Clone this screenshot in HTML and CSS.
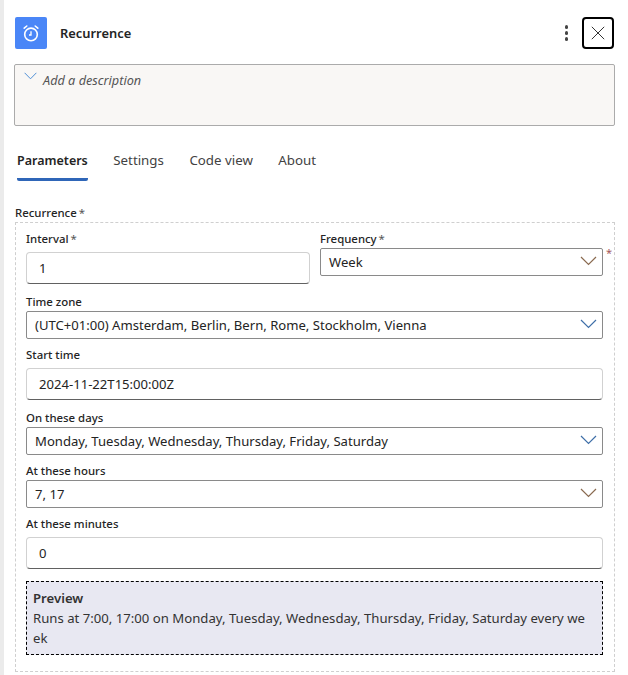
FILE: index.html
```html
<!DOCTYPE html>
<html lang="en">
<head>
<meta charset="utf-8">
<title>Recurrence</title>
<link rel="stylesheet" href="styles.css">
</head>
<body>
<svg class="defs" width="0" height="0" aria-hidden="true">
  <symbol id="chev-warm" viewBox="0 0 17 10">
    <path d="M1 1 8.5 8.5 16 1" fill="none" stroke="#8a6a50" stroke-width="1.2"/>
  </symbol>
  <symbol id="chev-cool" viewBox="0 0 17 10">
    <path d="M1 1 8.5 8.5 16 1" fill="none" stroke="#3f6fa8" stroke-width="1.2"/>
  </symbol>
</svg>
<div class="panel">
  <header class="head">
    <div class="app-icon">
      <svg width="18" height="18" viewBox="0 0 18 18" fill="none" stroke="#fff" stroke-width="1.6">
        <circle cx="9" cy="10.4" r="6.3"/>
        <path d="M9 7.2V11H7" stroke-width="1.3"/>
        <path d="M2.2 4.2 4.8 2M15.8 4.2 13.2 2" stroke-linecap="round"/>
      </svg>
    </div>
    <div class="title">Recurrence</div>
    <div class="more"><i></i><i></i><i></i></div>
    <button class="close" aria-label="Close">
      <svg width="14" height="14" viewBox="0 0 14 14" stroke="#333" stroke-width="1" fill="none"><path d="M.8.8 13.2 13.2M13.2.8.8 13.2"/></svg>
    </button>
  </header>

  <div class="desc">
    <svg class="desc-chev" width="13" height="8" viewBox="0 0 13 8" fill="none" stroke="#4f8fd6" stroke-width="1"><path d="M.6.8 6.5 6.8 12.4.8"/></svg>
    <span>Add a description</span>
  </div>

  <nav class="tabs">
    <span class="tab active">Parameters</span>
    <span class="tab">Settings</span>
    <span class="tab">Code view</span>
    <span class="tab">About</span>
  </nav>

  <div class="group-label">Recurrence <b>*</b></div>
  <section class="group">
    <div class="row">
      <div class="col">
        <label class="label to-input">Interval <b>*</b></label>
        <div class="input">1</div>
      </div>
      <div class="col col-freq">
        <label class="label to-select">Frequency <b>*</b></label>
        <div class="select">Week<svg class="chev"><use href="#chev-warm"/></svg></div>
        <span class="req">*</span>
      </div>
    </div>

    <label class="label after-input to-select">Time zone</label>
    <div class="select">(UTC+01:00) Amsterdam, Berlin, Bern, Rome, Stockholm, Vienna<svg class="chev"><use href="#chev-cool"/></svg></div>

    <label class="label after-select to-input">Start time</label>
    <div class="input">2024-11-22T15:00:00Z</div>

    <label class="label after-input to-select">On these days</label>
    <div class="select">Monday, Tuesday, Wednesday, Thursday, Friday, Saturday<svg class="chev"><use href="#chev-cool"/></svg></div>

    <label class="label after-select to-select">At these hours</label>
    <div class="select">7, 17<svg class="chev"><use href="#chev-warm"/></svg></div>

    <label class="label after-select to-input">At these minutes</label>
    <div class="input">0</div>

    <div class="preview">
      <div class="preview-title">Preview</div>
      <div class="preview-text">Runs at 7:00, 17:00 on Monday, Tuesday, Wednesday, Thursday, Friday, Saturday every we<br>ek</div>
    </div>
  </section>
</div>
</body>
</html>
```
FILE: styles.css
```css
* { box-sizing: border-box; }
html, body { margin: 0; padding: 0; height: 100%; overflow: hidden; }
body {
  background: #fff;
  color: #242424;
  font-family: "Noto Sans", "Open Sans", sans-serif;
  font-size: 13.1px;
  display: flex;
}
.defs { position: absolute; }
.panel {
  flex: 1;
  height: 675px;
  border-left: 4px solid #ebebeb;
  padding: 17px 13px 0 10px;
}
.head { display: flex; align-items: center; height: 32px; padding-left: 1px; }
.app-icon {
  width: 32px; height: 32px;
  background: #4a86f7;
  border-radius: 2px;
  display: flex; align-items: center; justify-content: center;
}
.title { margin-left: 13px; font-size: 12.9px; font-weight: 600; flex: 1; color: #242424; }
.more { display: flex; flex-direction: column; gap: 2.5px; margin-right: 14px; }
.more i { width: 3.4px; height: 3.4px; border-radius: 50%; background: #444; display: block; }
.close {
  width: 32px; height: 32px;
  margin-right: 1px;
  padding: 0;
  border: 2px solid #000;
  border-radius: 4px;
  background: #fff;
  display: flex; align-items: center; justify-content: center;
}
.desc {
  margin-top: 15px;
  height: 62px;
  background: #f9f7f5;
  border: 1px solid #ababab;
  border-radius: 2px;
  padding: 7px 0 0 9px;
  display: flex;
  align-items: flex-start;
  gap: 6px;
  font-style: italic;
  font-size: 12.7px;
  color: #555;
  line-height: 17px;
}
.desc-chev { flex: none; }
.tabs { display: flex; margin-top: 24px; height: 31px; padding-left: 3px; gap: 25.5px; }
.tab { font-size: 13.3px; color: #424242; line-height: 20px; height: 31px; }
.tab.active { font-size: 12.5px; padding-top: 1px; color: #242424; font-weight: 600; border-bottom: 3px solid #2f66b8; border-radius: 0 0 2px 2px; }
.group-label { margin-top: 24px; font-size: 11.4px; line-height: 15px; padding-left: 1px; color: #242424; font-weight: 500; word-spacing: -1px; }
.group-label b, .label b { font-weight: 400; color: #555; }
.group {
  margin-top: 2px;
  margin-left: 1px;
  width: 600px;
  height: 450px;
  border: 1px dashed #cfcfcf;
  padding: 8px 11px 0 10px;
}
.row { display: flex; gap: 10px; }
.col { width: 284px; }
.col-freq { width: 283px; position: relative; }
.req { position: absolute; right: -9px; top: 15px; color: #a5585a; font-size: 11px; line-height: 14px; }
.label { display: block; font-size: 11.4px; font-weight: 500; line-height: 15px; color: #242424; }
.row .label { word-spacing: -1px; }
.after-input { margin-top: 10px; }
.after-select { margin-top: 8px; }
.to-select { margin-bottom: 2px; }
.to-input { margin-bottom: 6px; }
.select {
  height: 28px;
  border: 1px solid #8a8a8a;
  border-radius: 2px;
  padding: 0 5px 0 8px;
  display: flex;
  align-items: center;
  justify-content: space-between;
  background: #fff;
  line-height: 18px;
}
.chev { width: 17px; height: 10px; margin-top: -2px; flex: none; }
.input {
  height: 32px;
  border: 1px solid #d1d1d1;
  border-bottom-color: #616161;
  border-radius: 4px;
  padding-left: 12px;
  display: flex;
  align-items: center;
  background: #fff;
}
.preview {
  margin-top: 12px;
  height: 74px;
  background: #e8e8f2;
  border: 1px dashed #000;
  padding: 6px 6px 0;
  font-size: 13.16px;
  line-height: 20px;
  color: #333;
}
.preview-title { font-weight: 600; }
.preview-text { white-space: nowrap; }
```
